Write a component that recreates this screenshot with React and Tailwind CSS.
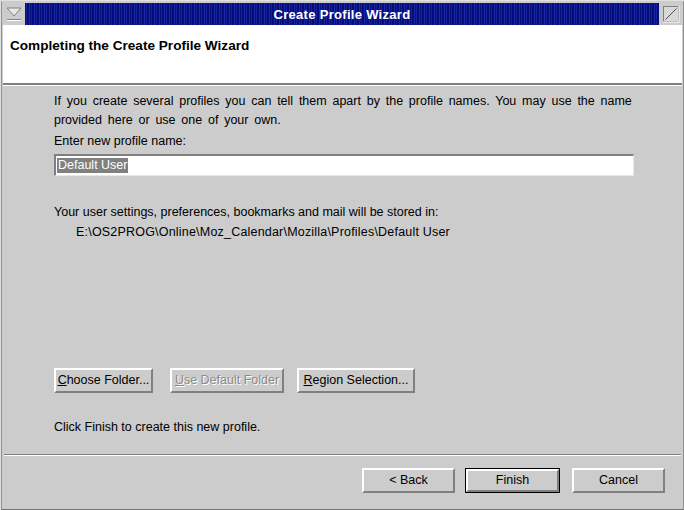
import React from "react";

const font = { fontFamily: '"Liberation Sans", Arial, sans-serif' };

function Btn({ children, w, def, disabled }) {
  return (
    <div
      className={`${w} h-[25px] ${def ? "border border-black" : ""} bg-[#cccccc]`}
    >
      <div className="w-full h-full border-2 border-t-white border-l-white border-r-[#808080] border-b-[#808080] flex items-center justify-center text-[12.5px] leading-none">
        <span
          className={
            disabled
              ? "text-[#8a8a8a] [text-shadow:1px_1px_0_#ffffff]"
              : "text-black"
          }
        >
          {children}
        </span>
      </div>
    </div>
  );
}

export default function App() {
  return (
    <div
      className="w-[684px] h-[510px] bg-[#cccccc] border-l border-t border-[#e0e0e0] border-r-[#606060] border-b-[#202020]"
      style={font}
    >
      <div className="w-full h-full border-l border-t border-r border-b border-l-[#909090] border-t-[#cccccc] border-r-[#909090] border-b-[#707070] flex flex-col px-[1px] pt-[1px]">
        {/* title bar */}
        <div className="h-[22px] flex shrink-0">
          <div className="w-[22px] h-[22px] bg-[#cccccc] flex items-center justify-center">
            <svg width="16" height="14" viewBox="0 0 16 14">
              <path d="M1 1 L15 1 L8 9 Z" fill="#e8e8e8" stroke="#808080" strokeWidth="1" />
              <path d="M1 12.5 H15" stroke="#808080" strokeWidth="1" />
              <path d="M1 13.5 H15" stroke="#ffffff" strokeWidth="1" />
            </svg>
          </div>
          <div className="flex-1 flex items-center justify-center bg-[#0a1484] bg-[repeating-linear-gradient(90deg,#08107e_0px,#08107e_1px,#14209a_1px,#14209a_2px,#060c78_2px,#060c78_4px,#1828a4_4px,#1828a4_5px)]">
            <span className="text-white font-bold text-[13px] leading-none tracking-[0.3px]">
              Create Profile Wizard
            </span>
          </div>
          <div className="w-[23px] h-[22px] bg-[#cccccc] flex items-center justify-center">
            <svg width="18" height="18" viewBox="0 0 18 18">
              <rect x="1.5" y="1.5" width="15" height="15" fill="#d8d8d8" stroke="#808080" />
              <path d="M1 17 H17 V1" stroke="#ffffff" fill="none" />
              <path d="M3.5 14.5 L14.5 3.5" stroke="#505050" strokeWidth="1" />
            </svg>
          </div>
        </div>

        {/* header */}
        <div className="h-[60px] bg-white border-b-2 border-b-[#808080] pl-[7px] pt-[12px] shrink-0">
          <div className="font-bold text-[13.6px] leading-[18px] text-black">
            Completing the Create Profile Wizard
          </div>
        </div>
        <div className="h-[1px] bg-white shrink-0" />

        {/* body */}
        <div className="flex-1 flex flex-col pl-[51px] pr-[40px] pt-[6px] text-[12.5px] text-black">
          <div className="leading-[19px] [word-spacing:2.3px] whitespace-nowrap">
            If you create several profiles you can tell them apart by the profile names. You may use the name
            <br />
            provided here or use one of your own.
          </div>
          <div className="leading-[19px] mt-[2px]">Enter new profile name:</div>
          <div className="mt-[3px] h-[22px] w-[580px] bg-white border-t-2 border-l-2 border-t-[#808080] border-l-[#808080] border-r border-b border-r-[#e8e8e8] border-b-[#e8e8e8] flex items-center pl-[1px]">
            <span className="bg-[#808080] text-white leading-[15px] px-[1px]">Default User</span>
          </div>
          <div className="leading-[19px] mt-[27px]">
            Your user settings, preferences, bookmarks and mail will be stored in:
          </div>
          <div className="leading-[19px] mt-[1px] pl-[22px] tracking-[0.2px]">
            E:\OS2PROG\Online\Moz_Calendar\Mozilla\Profiles\Default User
          </div>

          <div className="flex mt-[126px] gap-[17px]">
            <Btn w="w-[99px]">
              <u>C</u>hoose Folder...
            </Btn>
            <div className="w-[114px]">
              <Btn w="w-[114px]" disabled>
                <u>U</u>se Default Folder
              </Btn>
            </div>
            <div className="-ml-[4px]">
              <Btn w="w-[118px]">
                <u>R</u>egion Selection...
              </Btn>
            </div>
          </div>

          <div className="leading-[19px] mt-[25px]">Click Finish to create this new profile.</div>
        </div>

        {/* separator */}
        <div className="mx-[1px] shrink-0">
          <div className="h-[1px] bg-[#808080]" />
          <div className="h-[1px] bg-white" />
        </div>

        {/* bottom buttons */}
        <div className="h-[53px] flex justify-end items-start pt-[12px] pr-[17px] gap-[10px] shrink-0">
          <Btn w="w-[93px]">&lt; Back</Btn>
          <Btn w="w-[95px]" def>
            Finish
          </Btn>
          <div className="ml-[2px]">
            <Btn w="w-[93px]">Cancel</Btn>
          </div>
        </div>
      </div>
    </div>
  );
}
